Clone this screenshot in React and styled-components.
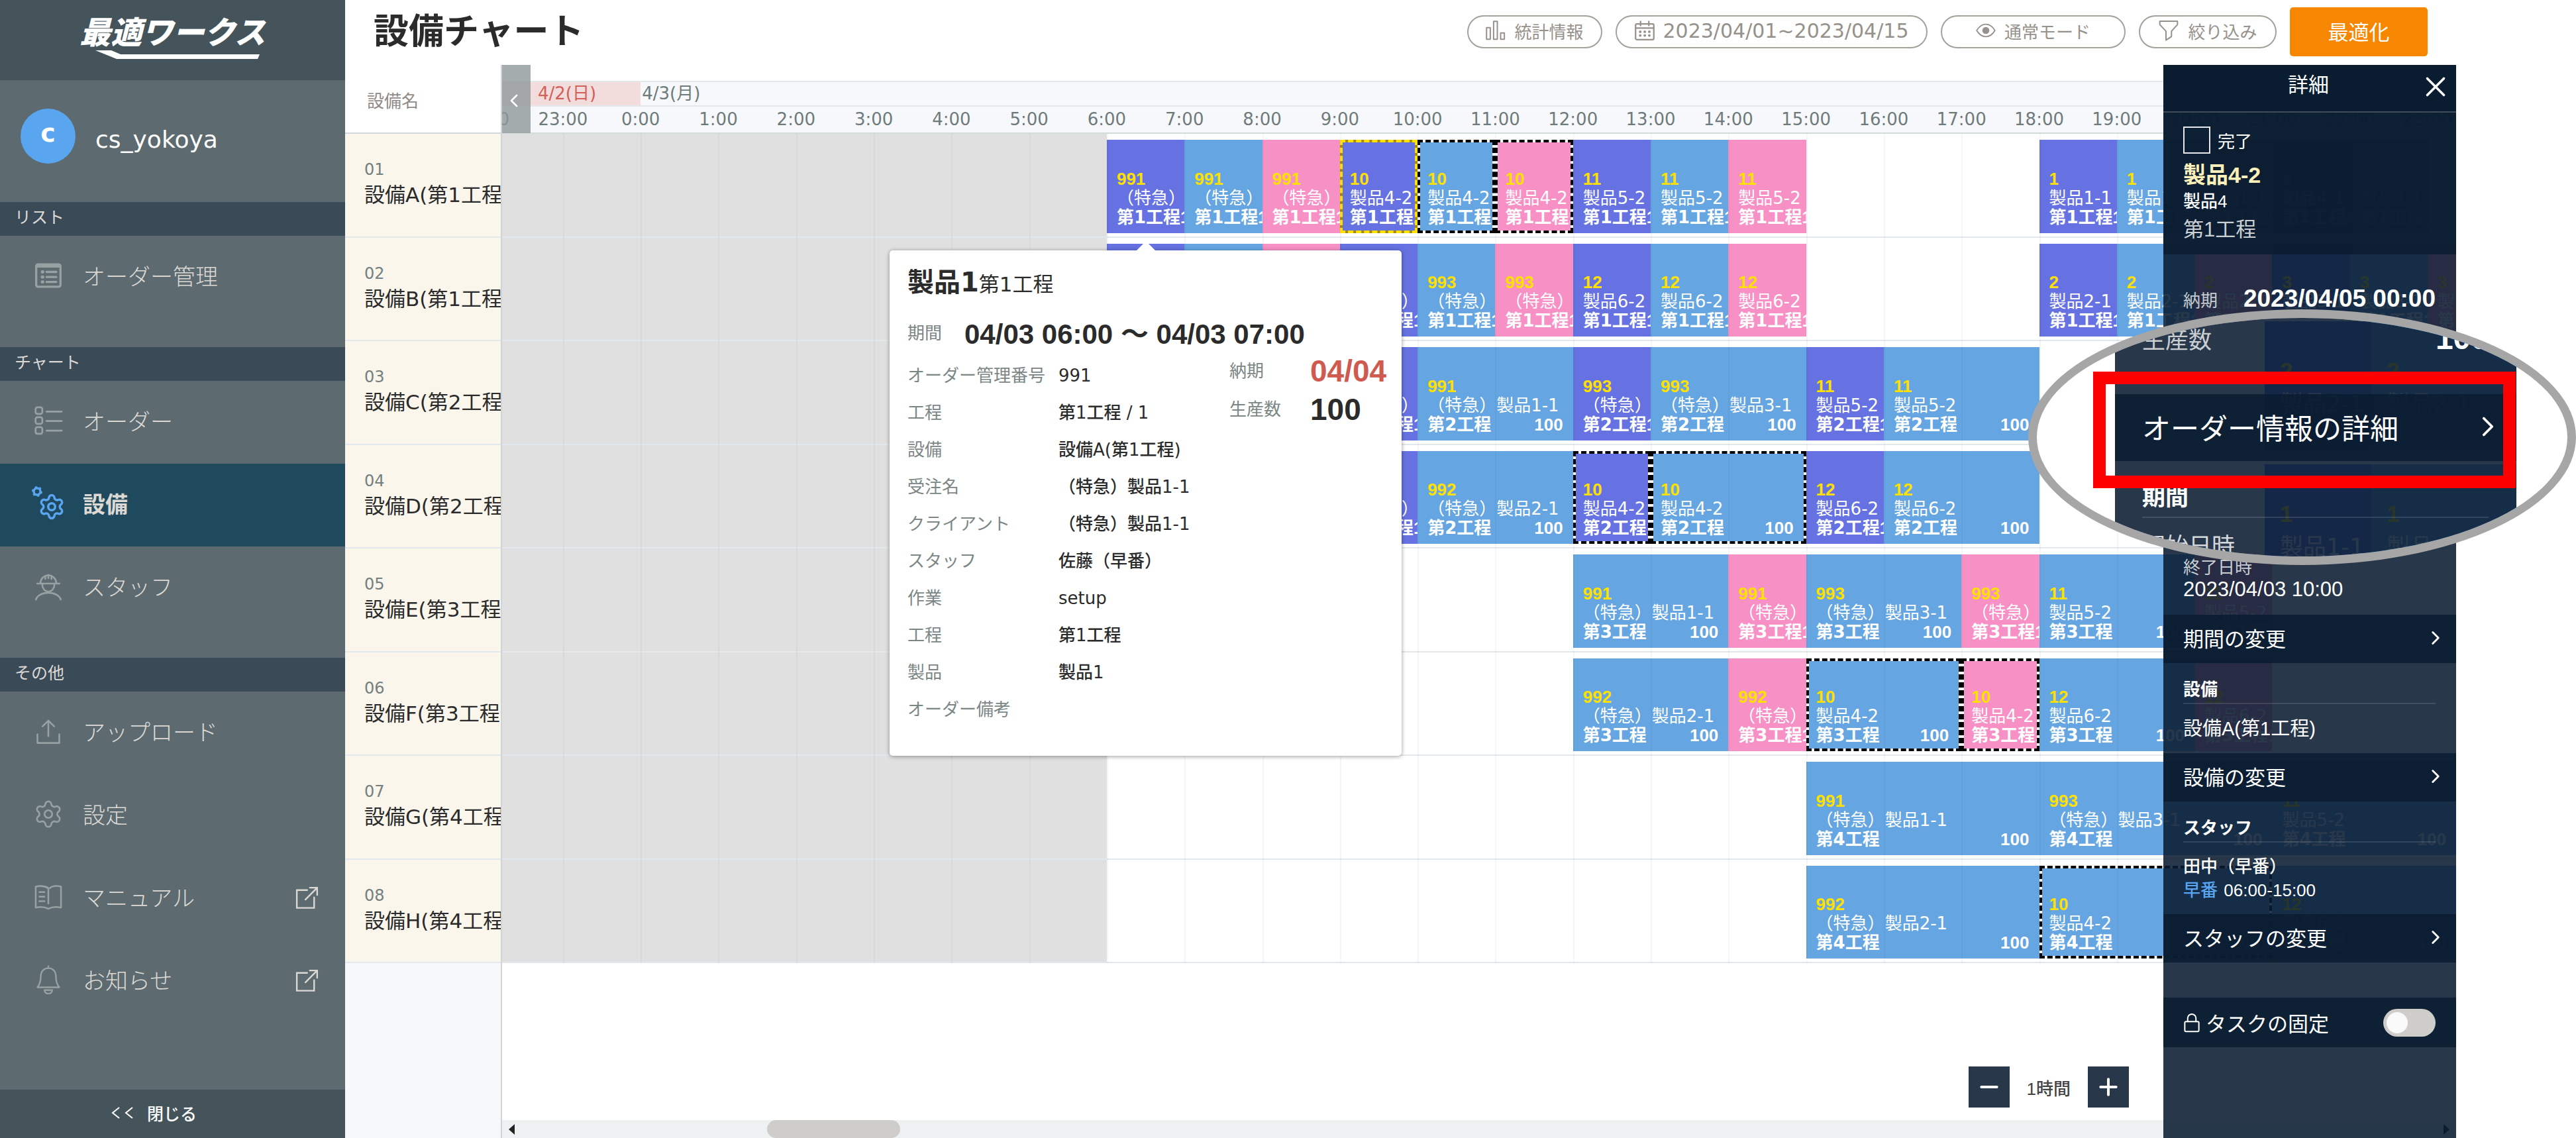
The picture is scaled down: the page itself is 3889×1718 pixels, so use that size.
import React, { useState } from "react";
import styled, { createGlobalStyle, css } from "styled-components";
import { Settings, ChevronLeft, ChevronRight, X, Plus, Minus } from "lucide-react";

const ui = `"DejaVu Sans", "Noto Sans CJK JP", sans-serif`;
const arial = `"Liberation Sans", "Noto Sans CJK JP", sans-serif`;
const sheet = "rgba(10, 28, 49, 0.88)";

// one track per hour, the first and last are cut off by the viewport
const timeTracks = "47fr repeat(24, 60fr) 22fr";
const hourLine = (hour) => hour + 3;

const machines = [
  {
    no: "01",
    name: "設備A(第1工程)",
    process: "第1工程",
    tasks: [
      { from: 6, to: 7, id: "991", rush: true, name: "製品1-1", color: "purple" },
      { from: 7, to: 8, id: "991", rush: true, name: "製品1-1", color: "blue" },
      { from: 8, to: 9, id: "991", rush: true, name: "製品1-1", color: "pink" },
      { from: 9, to: 10, id: "10", name: "製品4-2", color: "purple", mark: "selected" },
      { from: 10, to: 11, id: "10", name: "製品4-2", color: "blue", mark: "related" },
      { from: 11, to: 12, id: "10", name: "製品4-2", color: "pink", mark: "related" },
      { from: 12, to: 13, id: "11", name: "製品5-2", color: "purple" },
      { from: 13, to: 14, id: "11", name: "製品5-2", color: "blue" },
      { from: 14, to: 15, id: "11", name: "製品5-2", color: "pink" },
      { from: 18, to: 19, id: "1", name: "製品1-1", color: "purple" },
      { from: 19, to: 20, id: "1", name: "製品1-1", color: "blue" },
      { from: 20, to: 21, id: "1", name: "製品1-1", color: "pink" },
      { from: 21, to: 22, id: "4", name: "製品4-1", color: "purple" },
      { from: 22, to: 23, id: "4", name: "製品4-1", color: "blue" },
    ],
  },
  {
    no: "02",
    name: "設備B(第1工程)",
    process: "第1工程",
    tasks: [
      { from: 6, to: 7, id: "992", rush: true, name: "製品2-1", color: "purple" },
      { from: 7, to: 8, id: "992", rush: true, name: "製品2-1", color: "blue" },
      { from: 8, to: 9, id: "992", rush: true, name: "製品2-1", color: "pink" },
      { from: 9, to: 10, id: "993", rush: true, name: "製品3-1", color: "purple" },
      { from: 10, to: 11, id: "993", rush: true, name: "製品3-1", color: "blue" },
      { from: 11, to: 12, id: "993", rush: true, name: "製品3-1", color: "pink" },
      { from: 12, to: 13, id: "12", name: "製品6-2", color: "purple" },
      { from: 13, to: 14, id: "12", name: "製品6-2", color: "blue" },
      { from: 14, to: 15, id: "12", name: "製品6-2", color: "pink" },
      { from: 18, to: 19, id: "2", name: "製品2-1", color: "purple" },
      { from: 19, to: 20, id: "2", name: "製品2-1", color: "blue" },
      { from: 20, to: 21, id: "2", name: "製品2-1", color: "pink" },
      { from: 21, to: 22, id: "3", name: "製品3-1", color: "purple" },
      { from: 22, to: 23, id: "3", name: "製品3-1", color: "blue" },
      { from: 23, to: 24, id: "3", name: "製品3-1", color: "pink" },
    ],
  },
  {
    no: "03",
    name: "設備C(第2工程)",
    process: "第2工程",
    tasks: [
      { from: 9, to: 10, id: "991", rush: true, name: "製品1-1", color: "purple" },
      { from: 10, to: 12, id: "991", rush: true, name: "製品1-1", color: "blue" },
      { from: 12, to: 13, id: "993", rush: true, name: "製品3-1", color: "purple" },
      { from: 13, to: 15, id: "993", rush: true, name: "製品3-1", color: "blue" },
      { from: 15, to: 16, id: "11", name: "製品5-2", color: "purple" },
      { from: 16, to: 18, id: "11", name: "製品5-2", color: "blue" },
    ],
  },
  {
    no: "04",
    name: "設備D(第2工程)",
    process: "第2工程",
    tasks: [
      { from: 9, to: 10, id: "992", rush: true, name: "製品2-1", color: "purple" },
      { from: 10, to: 12, id: "992", rush: true, name: "製品2-1", color: "blue" },
      { from: 12, to: 13, id: "10", name: "製品4-2", color: "purple", mark: "related" },
      { from: 13, to: 15, id: "10", name: "製品4-2", color: "blue", mark: "related" },
      { from: 15, to: 16, id: "12", name: "製品6-2", color: "purple" },
      { from: 16, to: 18, id: "12", name: "製品6-2", color: "blue" },
    ],
  },
  {
    no: "05",
    name: "設備E(第3工程)",
    process: "第3工程",
    tasks: [
      { from: 12, to: 14, id: "991", rush: true, name: "製品1-1", color: "blue" },
      { from: 14, to: 15, id: "991", rush: true, name: "製品1-1", color: "pink" },
      { from: 15, to: 17, id: "993", rush: true, name: "製品3-1", color: "blue" },
      { from: 17, to: 18, id: "993", rush: true, name: "製品3-1", color: "pink" },
      { from: 18, to: 20, id: "11", name: "製品5-2", color: "blue" },
      { from: 20, to: 21, id: "11", name: "製品5-2", color: "pink" },
    ],
  },
  {
    no: "06",
    name: "設備F(第3工程)",
    process: "第3工程",
    tasks: [
      { from: 12, to: 14, id: "992", rush: true, name: "製品2-1", color: "blue" },
      { from: 14, to: 15, id: "992", rush: true, name: "製品2-1", color: "pink" },
      { from: 15, to: 17, id: "10", name: "製品4-2", color: "blue", mark: "related" },
      { from: 17, to: 18, id: "10", name: "製品4-2", color: "pink", mark: "related" },
      { from: 18, to: 20, id: "12", name: "製品6-2", color: "blue" },
      { from: 20, to: 21, id: "12", name: "製品6-2", color: "pink" },
    ],
  },
  {
    no: "07",
    name: "設備G(第4工程)",
    process: "第4工程",
    tasks: [
      { from: 15, to: 18, id: "991", rush: true, name: "製品1-1", color: "blue" },
      { from: 18, to: 21, id: "993", rush: true, name: "製品3-1", color: "blue" },
      { from: 21, to: 24, id: "11", name: "製品5-2", color: "blue" },
    ],
  },
  {
    no: "08",
    name: "設備H(第4工程)",
    process: "第4工程",
    tasks: [
      { from: 15, to: 18, id: "992", rush: true, name: "製品2-1", color: "blue" },
      { from: 18, to: 21, id: "10", name: "製品4-2", color: "blue", mark: "related" },
      { from: 21, to: 24, id: "12", name: "製品6-2", color: "blue" },
    ],
  },
];

const popupRows = [
  ["オーダー管理番号", "991"],
  ["工程", "第1工程 / 1"],
  ["設備", "設備A(第1工程)"],
  ["受注名", "（特急）製品1-1"],
  ["クライアント", "（特急）製品1-1"],
  ["スタッフ", "佐藤（早番）"],
  ["作業", "setup"],
  ["工程", "第1工程"],
  ["製品", "製品1"],
  ["オーダー備考", ""],
];

const hours = [-2, ...Array.from({ length: 25 }, (_, i) => i - 1)];

const Icon = ({ size = 44, width = 1.4, children }) => (
  <svg
    width={size}
    height={size}
    viewBox="0 0 24 24"
    fill="none"
    stroke="currentColor"
    strokeWidth={width}
    strokeLinecap="round"
    strokeLinejoin="round"
    aria-hidden="true"
  >
    {children}
  </svg>
);

const TableIcon = () => (
  <Icon width={1.8}>
    <rect x="2" y="2.8" width="20" height="18.4" rx="1.5" />
    <path d="M2.5 4.2h19" strokeWidth="2.4" />
    <path d="M7 9h.4M7 13.2h.4M7 17.2h.4" strokeWidth="2.6" />
    <path d="M10.5 9h8M10.5 13.2h8M10.5 17.2h8" />
  </Icon>
);

const ListIcon = () => (
  <Icon width={1.5}>
    <rect x="1.5" y="1" width="5.5" height="5.5" rx="1.5" />
    <rect x="1.5" y="9.2" width="5.5" height="5.5" rx="1.5" />
    <rect x="1.5" y="17.4" width="5.5" height="5.5" rx="1.5" />
    <path d="M10.5 4.5H23M10.5 12.3H23M10.5 20.3H23" />
  </Icon>
);

const GearsIcon = () => (
  <svg width="52" height="52" viewBox="0 0 52 52" aria-hidden="true">
    <Settings x="10" y="10" width="42" height="42" strokeWidth={2} />
    <circle cx="9" cy="8" r="5" fill="none" stroke="currentColor" strokeWidth="3.5" />
    <circle
      cx="9"
      cy="8"
      r="7"
      fill="none"
      stroke="currentColor"
      strokeWidth="2"
      strokeDasharray="3.3 4"
    />
  </svg>
);

const WorkerIcon = () => (
  <Icon width={1.4}>
    <path d="M5.5 9.5a6.5 6.5 0 0 1 13 0M2.8 9.8h18.4" />
    <path d="M9.5 6V3.5M12 5.5V2.6M14.5 6V3.5" />
    <path d="M7 10.5a5 6 0 0 0 10 0" />
    <path d="M1.8 23a10.3 6.5 0 0 1 20.4 0" />
  </Icon>
);

const UploadIcon = () => (
  <Icon>
    <path d="M12 16V3.2M7.2 8 12 3.2 16.8 8" />
    <path d="M3 14.5V21.6h18V14.5" />
  </Icon>
);

const BookIcon = () => (
  <Icon width={1.4}>
    <path d="M12 4.8C9 3 5 2.8 1.6 3.5v17.3c3.5-.8 7.4-.6 10.4.9 3-1.5 6.9-1.7 10.4-.9V3.5C19 2.8 15 3 13.3 4.8" />
    <path d="M12 4.8V17.500M4.6 8h4.2M4.6 11.8h4.2M4.6 15.5h4.2" />
  </Icon>
);

const BellIcon = () => (
  <Icon width={1.3}>
    <path d="M12 .8v1.7M12 2.5c-4 0-6.300 3-6.300 7.500 0 3.500-.9 6-2.700 8.300h18c-1.800-2.300-2.700-4.800-2.700-8.300 0-4.500-2.300-7.500-6.300-7.500z" />
    <path d="M8.800 20.600a3.200 2.900 0 0 0 6.400 0z" />
  </Icon>
);

const ExternalIcon = () => (
  <Icon size={38} width={1.5}>
    <path d="M12.5 5.5H2.6v17h16.5v-10" strokeLinejoin="miter" />
    <path d="M15 3.2h7v7M22 3.2 10.8 14.6" strokeLinejoin="miter" />
  </Icon>
);

const BarsIcon = () => (
  <Icon size={30} width={1.6}>
    <rect x="1" y="8.5" width="4.5" height="14" />
    <rect x="9.5" y="1" width="4.5" height="21.5" />
    <rect x="18" y="15" width="4.5" height="7.5" />
  </Icon>
);

const CalendarIcon = () => (
  <Icon size={30} width={1.8}>
    <rect x="1" y="4" width="22" height="19" rx="1.5" />
    <path d="M1 9h22M7 1v5M17 1v5" />
    <path d="M6.5 13.5h.2M12 13.5h.2M17.5 13.5h.2M6.5 18h.2M12 18h.2M17.5 18h.2" strokeWidth="3" />
  </Icon>
);

const EyeIcon = () => (
  <Icon size={30} width={1.5}>
    <path d="M1 12c3-5 7-7.5 11-7.5S20 7 23 12c-3 5-7 7.500-11 7.500S4 17 1 12z" />
    <circle cx="12" cy="12" r="3.5" fill="currentColor" />
  </Icon>
);

const FunnelIcon = () => (
  <Icon size={32} width={1.5}>
    <path d="M2 1.5h20v3.8l-6.800 7.500v6L9 23v-10.200L2 5.300z" />
  </Icon>
);

const LockIcon = () => (
  <Icon size={30} width={1.6}>
    <rect x="3.5" y="10.5" width="17" height="12" rx="1.5" />
    <path d="M7 10.5V6.500a5 5 0 0 1 10 0v4" />
  </Icon>
);

const Task = ({ task, process }) => {
  // an hour is only wide enough for the rush tag
  const showName = !task.rush || task.to - task.from > 1;

  return (
    <TaskBox $from={task.from} $to={task.to} $color={task.color} $mark={task.mark}>
      <TaskId>{task.id}</TaskId>
      <div>
        {task.rush && "（特急）"}
        {showName && task.name}
      </div>
      <TaskProcess>
        <span>{process}</span>
        <TaskCount>100</TaskCount>
      </TaskProcess>
    </TaskBox>
  );
};

const Sidebar = () => (
  <Side>
    <Brand>
      <BrandText>最適ワークス</BrandText>
      <svg width="270" height="14" viewBox="0 0 270 14" aria-hidden="true">
        <path d="M18 0h24l14 6h210l-3 7H50z" fill="#fff" />
      </svg>
    </Brand>
    <User>
      <Avatar>c</Avatar>
      <UserName>cs_yokoya</UserName>
    </User>
    <SideTitle>リスト</SideTitle>
    <Menu>
      <MenuItem href="#orders">
        <TableIcon />
        <span>オーダー管理</span>
      </MenuItem>
    </Menu>
    <SideTitle>チャート</SideTitle>
    <Menu>
      <MenuItem href="#order-chart">
        <ListIcon />
        <span>オーダー</span>
      </MenuItem>
      <MenuItem href="#machine-chart" $active>
        <GearsIcon />
        <span>設備</span>
      </MenuItem>
      <MenuItem href="#staff-chart">
        <WorkerIcon />
        <span>スタッフ</span>
      </MenuItem>
    </Menu>
    <SideTitle>その他</SideTitle>
    <Menu>
      <MenuItem href="#upload">
        <UploadIcon />
        <span>アップロード</span>
      </MenuItem>
      <MenuItem href="#settings">
        <Settings size={46} strokeWidth={1.4} />
        <span>設定</span>
      </MenuItem>
      <MenuItem href="#manual">
        <BookIcon />
        <span>マニュアル</span>
        <ExternalIcon />
      </MenuItem>
      <MenuItem href="#news">
        <BellIcon />
        <span>お知らせ</span>
        <ExternalIcon />
      </MenuItem>
    </Menu>
    <CloseMenu type="button">
      <svg width="34" height="20" viewBox="0 0 34 20" fill="none" stroke="currentColor" strokeWidth="2" aria-hidden="true">
        <path d="M12 2 2 10l10 8M32 2 22 10l10 8" />
      </svg>
      閉じる
    </CloseMenu>
  </Side>
);

const TaskPopup = () => (
  <Popup>
    <PopupTitle>
      製品1<small>第1工程</small>
    </PopupTitle>
    <Period>
      <PopupLabel as="span">期間</PopupLabel>
      <strong>04/03 06:00 〜 04/03 07:00</strong>
    </Period>
    <PopupBody>
      <PopupList>
        {popupRows.map(([label, value], i) => (
          <PopupRow key={i}>
            <PopupLabel>{label}</PopupLabel>
            <PopupValue>{value}</PopupValue>
          </PopupRow>
        ))}
      </PopupList>
      <PopupList>
        <PopupFigure>
          <PopupLabel>納期</PopupLabel>
          <FigureValue $late>04/04</FigureValue>
        </PopupFigure>
        <PopupFigure>
          <PopupLabel>生産数</PopupLabel>
          <FigureValue>100</FigureValue>
        </PopupFigure>
      </PopupList>
    </PopupBody>
  </Popup>
);

const DetailPanel = () => {
  const [done, setDone] = useState(false);
  const [locked, setLocked] = useState(false);

  return (
    <Panel>
      <PanelHeader>
        <h2>詳細</h2>
        <ClosePanel type="button" aria-label="閉じる">
          <X size={50} strokeWidth={1.7} />
        </ClosePanel>
      </PanelHeader>
      <Summary>
        <Done>
          <DoneBox type="checkbox" checked={done} onChange={() => setDone(!done)} />
          完了
        </Done>
        <SummaryTitle>製品4-2</SummaryTitle>
        <SummaryProduct>製品4</SummaryProduct>
        <SummaryProcess>第1工程</SummaryProcess>
      </Summary>
      <Figures>
        <Figure>
          <span>納期</span>
          <strong>2023/04/05 00:00</strong>
        </Figure>
        <Figure>
          <span>生産数</span>
          <strong>100</strong>
        </Figure>
      </Figures>
      <PanelButton type="button">
        オーダー情報の詳細
        <ChevronRight size={34} strokeWidth={2} />
      </PanelButton>
      <Section>
        <SectionTitle>期間</SectionTitle>
        <DateLabel>開始日時</DateLabel>
        <DateValue>2023/04/03 09:00</DateValue>
        <DateLabel>終了日時</DateLabel>
        <DateValue>2023/04/03 10:00</DateValue>
      </Section>
      <PanelButton type="button">
        期間の変更
        <ChevronRight size={34} strokeWidth={2} />
      </PanelButton>
      <Section>
        <SectionTitle>設備</SectionTitle>
        <MachineName>設備A(第1工程)</MachineName>
      </Section>
      <PanelButton type="button">
        設備の変更
        <ChevronRight size={34} strokeWidth={2} />
      </PanelButton>
      <Section>
        <SectionTitle>スタッフ</SectionTitle>
        <StaffLine>田中（早番）</StaffLine>
        <StaffLine>
          <em>早番</em> 06:00-15:00
        </StaffLine>
      </Section>
      <PanelButton type="button">
        スタッフの変更
        <ChevronRight size={34} strokeWidth={2} />
      </PanelButton>
      <LockRow>
        <LockIcon />
        タスクの固定
        <Toggle type="checkbox" role="switch" checked={locked} onChange={() => setLocked(!locked)} />
      </LockRow>
    </Panel>
  );
};

// enlarged view of the "オーダー情報の詳細" entry
const Magnifier = () => (
  <Callout>
    <Lens>
      <LensChart>
        <LensTask $color="purple">
          <b>2</b>製品2-1
        </LensTask>
        <LensTask $color="blue">
          <b>2</b>製品2-1
        </LensTask>
        <LensTask $color="purple">
          <b>1</b>製品1-1
        </LensTask>
        <LensTask $color="blue">
          <b>1</b>製品
        </LensTask>
      </LensChart>
      <LensSheet>
        <LensFigure>
          <span>生産数</span>
          <strong>100</strong>
        </LensFigure>
        <LensButton type="button">
          オーダー情報の詳細
          <ChevronRight size={50} strokeWidth={1.8} />
        </LensButton>
        <LensSection>
          <LensTitle>期間</LensTitle>
          <p>開始日時</p>
        </LensSection>
      </LensSheet>
    </Lens>
    <RedFrame />
  </Callout>
);

const App = () => {
  return (
    <>
      <GlobalStyle />
      <Page>
        <Sidebar />
        <Main>
          <TopBar>
            <Title>設備チャート</Title>
            <Tools>
              <Pill type="button" $width={204}>
                <BarsIcon />
                統計情報
              </Pill>
              <Pill type="button" $width={471} $large>
                <CalendarIcon />
                2023/04/01~2023/04/15
              </Pill>
              <Pill type="button" $width={279}>
                <EyeIcon />
                通常モード
              </Pill>
              <Pill type="button" $width={208}>
                <FunnelIcon />
                絞り込み
              </Pill>
              <Optimize type="button">最適化</Optimize>
            </Tools>
          </TopBar>
          <Chart>
            <Names>
              <NamesHeader>設備名</NamesHeader>
              <NameRows>
                {machines.map((m) => (
                  <NameCell key={m.no}>
                    <small>{m.no}</small>
                    {m.name}
                  </NameCell>
                ))}
              </NameRows>
            </Names>
            <Timeline>
              <Dates>
                <DateCell $sunday>4/2(日)</DateCell>
                <DateCell>4/3(月)</DateCell>
              </Dates>
              <Hours>
                {hours.map((h) => (
                  <Hour key={h} $hour={h}>
                    <span>{(h + 24) % 24}:00</span>
                  </Hour>
                ))}
              </Hours>
              <Rows>
                <Closed />
                {machines.map((m) => (
                  <Row key={m.no}>
                    {m.tasks.map((t, i) => (
                      <Task key={i} task={t} process={m.process} />
                    ))}
                  </Row>
                ))}
                <Ticks>
                  {Array.from({ length: 26 }, (_, i) => (
                    <i key={i} />
                  ))}
                </Ticks>
              </Rows>
              <Scrollbar>
                <Arrow />
                <Thumb />
                <Arrow $right />
              </Scrollbar>
              <Fold type="button" aria-label="前へ">
                <ChevronLeft size={32} strokeWidth={2} />
              </Fold>
              <TaskPopup />
              <Scale>
                <ScaleButton type="button" aria-label="縮小">
                  <Minus size={40} strokeWidth={2.4} />
                </ScaleButton>
                <span>1時間</span>
                <ScaleButton type="button" aria-label="拡大">
                  <Plus size={40} strokeWidth={2.4} />
                </ScaleButton>
              </Scale>
            </Timeline>
            <DetailPanel />
          </Chart>
        </Main>
        <Magnifier />
      </Page>
    </>
  );
};

export default App;

const colors = {
  purple: "#6672e2",
  blue: "#65a5e1",
  pink: "#f790c5",
};

const GlobalStyle = createGlobalStyle`
  * {
    box-sizing: border-box;
  }

  body {
    margin: 0;
    background: #fff;
    color: #2b2b2b;
    font-family: ${ui};
    font-size: 26px;
  }

  button {
    font-family: inherit;
    cursor: pointer;
  }

  h1, h2, h3, p, dl, dd {
    margin: 0;
    font-weight: 400;
  }
`;

const Page = styled.div`
  position: relative;
  display: flex;
  height: 100vh;
  overflow: hidden;
`;

const Side = styled.nav`
  flex: none;
  display: flex;
  flex-direction: column;
  width: 521px;
  background: #5d6b70;
  color: #dcd9d5;
`;

const Brand = styled.div`
  display: flex;
  flex-direction: column;
  align-items: center;
  height: 121px;
  padding-top: 24px;
  background: #44545a;
`;

const BrandText = styled.div`
  color: #fff;
  font-size: 47px;
  font-style: italic;
  font-weight: 900;
  line-height: 52px;
`;

const User = styled.div`
  display: flex;
  align-items: center;
  gap: 30px;
  height: 184px;
  padding: 0 0 16px 31px;
  color: #fff;
  font-size: 36px;
`;

const UserName = styled.span`
  padding-top: 10px;
`;

const Avatar = styled.span`
  width: 83px;
  height: 83px;
  border-radius: 50%;
  background: #59a5f0;
  font-size: 38px;
  font-weight: 700;
  line-height: 74px;
  text-align: center;
`;

const SideTitle = styled.div`
  height: 51px;
  padding-left: 22px;
  background: #3b4a57;
  font-size: 25px;
  line-height: 48px;
`;

const Menu = styled.div`
  padding-bottom: 43px;
`;

const MenuItem = styled.a`
  display: grid;
  grid-template-columns: 52px 1fr auto;
  align-items: center;
  justify-items: center;
  column-gap: 26px;
  height: 125px;
  padding: 0 39px 6px 47px;
  background: ${(props) => (props.$active ? "#1f495c" : "none")};
  color: inherit;
  font-size: 34px;
  font-weight: ${(props) => (props.$active ? 700 : 300)};
  text-decoration: none;

  span {
    justify-self: start;
  }

  svg:first-child {
    color: ${(props) => (props.$active ? "#59a5f0" : "#97a1a2")};
  }
`;

const CloseMenu = styled.button`
  display: flex;
  align-items: center;
  gap: 20px;
  height: 73px;
  margin-top: auto;
  padding: 0 0 4px 168px;
  border: none;
  background: #44545a;
  color: #fff;
  font-size: 25px;
  font-weight: 500;
`;

const Main = styled.main`
  flex: 1;
  min-width: 0;
  display: flex;
  flex-direction: column;
  padding-right: 181px;
`;

const TopBar = styled.header`
  display: flex;
  align-items: center;
  justify-content: space-between;
  height: 98px;
  padding: 0 43px 2px;
`;

const Title = styled.h1`
  font-size: 53px;
  font-weight: 700;
  line-height: 80px;
`;

const Tools = styled.div`
  display: flex;
  align-items: center;
  gap: 20px;
`;

const Pill = styled.button`
  display: flex;
  align-items: center;
  justify-content: center;
  gap: 13px;
  width: ${(props) => props.$width}px;
  height: 50px;
  padding: 0 0 4px;
  border: 2px solid #a5a09a;
  border-radius: 25px;
  background: #fff;
  color: #97918b;
  font-size: ${(props) => (props.$large ? 30 : 26)}px;
  white-space: nowrap;
`;

const Optimize = styled.button`
  width: 208px;
  height: 74px;
  padding-bottom: 4px;
  border: none;
  border-radius: 5px;
  background: #f78600;
  color: #fff;
  font-size: 31px;
`;

const Chart = styled.div`
  position: relative;
  flex: 1;
  display: grid;
  grid-template-columns: 237px 1fr;
  min-height: 0;
  overflow: hidden;
`;

const Names = styled.div`
  border-right: 2px solid #cfd4d6;
  background: #f6f8fb;
`;

const NamesHeader = styled.div`
  height: 104px;
  padding: 34px 0 0 33px;
  border-bottom: 2px solid #d4dadb;
  background: #fff;
  color: #8f8a87;
  font-size: 26px;
`;

const NameRows = styled.div`
  display: grid;
  grid-template-rows: repeat(8, 1fr);
  height: 1252px;
`;

const NameCell = styled.div`
  padding: 36px 0 0 29px;
  border-bottom: 2px solid #e3e8ec;
  background: #faf6ec;
  font-size: 31px;
  line-height: 40px;
  white-space: nowrap;
  overflow: hidden;

  small {
    display: block;
    color: #74807f;
    font-size: 24px;
    line-height: 36px;
  }
`;

const Timeline = styled.div`
  position: relative;
  display: flex;
  flex-direction: column;
  min-width: 0;
  overflow: hidden;
`;

const Dates = styled.div`
  display: grid;
  grid-template-columns: ${timeTracks};
  height: 37px;
  margin-top: 24px;
  border-top: 2px solid #e3e8ea;
  background: #f6f8fb;
`;

const DateCell = styled.div`
  grid-column: ${(props) => (props.$sunday ? "1 / 3" : "3 / -1")};
  padding-left: ${(props) => (props.$sunday ? 54 : 2)}px;
  background: ${(props) => (props.$sunday ? "#f2dcdc" : "none")};
  color: ${(props) => (props.$sunday ? "#d35f58" : "#6f7b7a")};
  line-height: 35px;
`;

const Hours = styled.div`
  display: grid;
  grid-template-columns: ${timeTracks};
  height: 43px;
  border-top: 2px solid #e3e8ea;
  border-bottom: 2px solid #d4dadb;
  background: #f6f8fb;
  color: #6f7b7a;
  line-height: 38px;
`;

// the label is centred on the start line of its hour
const Hour = styled.div`
  display: flex;
  justify-content: ${(props) => (props.$hour === -2 ? "flex-start" : "center")};
  grid-column: ${(props) => (props.$hour === -2 ? 1 : hourLine(props.$hour))};
  grid-row: 1;
  width: 0;

  span {
    flex: none;
    ${(props) => props.$hour === -2 && "margin-left: -64px;"}
  }
`;

const Rows = styled.div`
  position: relative;
  display: grid;
  grid-template-rows: repeat(8, 1fr);
  height: 1252px;
`;

const Row = styled.div`
  position: relative;
  display: grid;
  grid-template-columns: ${timeTracks};
  padding: 9px 0 5px;
  border-bottom: 2px solid #e3e8ec;
`;

const overlayGrid = css`
  position: absolute;
  inset: 0;
  display: grid;
  grid-template-columns: ${timeTracks};
  pointer-events: none;
`;

const Closed = styled.div`
  ${overlayGrid}

  &::before {
    content: "";
    grid-column: 1 / ${hourLine(6)};
    background: #e0e0e0;
  }
`;

const Ticks = styled.div`
  ${overlayGrid}

  i + i {
    border-left: 2px solid rgba(40, 70, 90, 0.05);
  }
`;

const TaskBox = styled.div`
  grid-column: ${(props) => hourLine(props.$from)} / ${(props) => hourLine(props.$to)};
  grid-row: 1;
  display: flex;
  flex-direction: column;
  justify-content: flex-end;
  min-width: 0;
  padding: 0 0 9px 15px;
  background: ${(props) => colors[props.$color]};
  color: #fff;
  line-height: 29px;
  white-space: nowrap;
  overflow: hidden;

  ${(props) =>
    props.$mark &&
    css`
      padding: 0 0 5px 11px;
      border: 4px dashed ${props.$mark === "selected" ? "#ffe100" : "#000"};
      background:
        linear-gradient(${colors[props.$color]}, ${colors[props.$color]}) padding-box,
        ${props.$mark === "selected" ? "#a08c00" : "#fff"};
    `}
`;

const TaskId = styled.div`
  color: #ffe100;
  font-family: ${arial};
  font-weight: 700;
`;

const TaskProcess = styled.div`
  display: flex;
  justify-content: space-between;
  padding-right: 15px;
  font-weight: 700;
`;

const TaskCount = styled.span`
  font-family: ${arial};
`;

const Scrollbar = styled.div`
  display: flex;
  align-items: center;
  height: 27px;
  margin-top: auto;
  padding: 0 10px;
  background: #edf1f2;
`;

const Arrow = styled.i`
  border: 8px solid transparent;
  border-width: 8px 9px;
  border-left-width: ${(props) => (props.$right ? 9 : 0)}px;
  border-right-width: ${(props) => (props.$right ? 0 : 9)}px;
  border-left-color: ${(props) => (props.$right ? "#222" : "transparent")};
  border-right-color: ${(props) => (props.$right ? "transparent" : "#222")};
`;

const Thumb = styled.div`
  width: 201px;
  height: 27px;
  margin: 0 auto 0 13%;
  border-radius: 14px;
  background: #cfcdca;
`;

const Fold = styled.button`
  position: absolute;
  top: 0;
  left: 0;
  width: 43px;
  height: 103px;
  padding: 8px 8px 0 0;
  border: none;
  background: rgba(143, 151, 154, 0.8);
  color: #fff;
`;

const Popup = styled.div`
  position: absolute;
  top: 280px;
  left: 585px;
  width: 773px;
  height: 763px;
  padding: 20px 20px 0 27px;
  border-radius: 5px;
  background: #fff;
  box-shadow: 0 1px 6px rgba(0, 0, 0, 0.4);

  &::before {
    content: "";
    position: absolute;
    top: -14px;
    left: 373px;
    border: 14px solid transparent;
    border-top: none;
    border-bottom-color: #fff;
  }
`;

const PopupTitle = styled.h3`
  font-size: 40px;
  font-weight: 700;
  line-height: 56px;

  small {
    font-size: 31px;
    font-weight: 400;
  }
`;

const Period = styled.div`
  display: flex;
  align-items: center;
  gap: 34px;
  height: 58px;
  margin-top: 14px;

  strong {
    font-family: ${arial};
    font-size: 42px;
    white-space: nowrap;
  }
`;

const PopupBody = styled.div`
  display: flex;
  justify-content: space-between;
`;

const PopupList = styled.dl`
  margin-top: 10px;
`;

const PopupRow = styled.div`
  display: grid;
  grid-template-columns: 228px auto;
  height: 56px;
  line-height: 56px;
`;

const PopupLabel = styled.dt`
  color: #7b8685;
  font-size: 26px;
  white-space: nowrap;
`;

const PopupValue = styled.dd`
  font-weight: 500;
  white-space: nowrap;
`;

const PopupFigure = styled.div`
  display: grid;
  grid-template-columns: 122px 118px;
  height: 58px;
  line-height: 42px;
`;

const FigureValue = styled.dd`
  color: ${(props) => (props.$late ? "#cf5b50" : "#2b2b2b")};
  font-family: ${arial};
  font-size: 46px;
  font-weight: 700;
`;

const Scale = styled.div`
  position: absolute;
  right: 494px;
  bottom: 46px;
  display: flex;
  align-items: center;
  gap: 26px;
  color: #444;
  font-family: ${arial};
  font-weight: 500;
`;

const ScaleButton = styled.button`
  display: flex;
  align-items: center;
  justify-content: center;
  width: 62px;
  height: 62px;
  padding: 0;
  border: none;
  background: #28384a;
  color: #fff;
`;

const Panel = styled.aside`
  position: absolute;
  top: 0;
  right: 0;
  bottom: 0;
  width: 442px;
  background: ${sheet};
  color: #fff;
  font-family: ${arial};
`;

const PanelHeader = styled.header`
  position: relative;
  height: 72px;
  border-bottom: 2px solid #3e4c5b;
  background: #091c30;
  text-align: center;

  h2 {
    padding-right: 4px;
    font-size: 31px;
    line-height: 62px;
  }
`;

const ClosePanel = styled.button`
  position: absolute;
  top: 8px;
  right: 6px;
  height: 50px;
  padding: 0;
  border: none;
  background: none;
  color: #fff;
`;

const Summary = styled.div`
  height: 214px;
  padding: 21px 31px 0 30px;
  background: ${sheet};
`;

const Done = styled.label`
  display: flex;
  align-items: center;
  gap: 11px;
  height: 42px;
  padding-bottom: 2px;
`;

const DoneBox = styled.input`
  appearance: none;
  width: 41px;
  height: 41px;
  margin: 0;
  border: 2px solid #e5e7e9;

  &:checked {
    background: #59a5f0;
  }
`;

const SummaryTitle = styled.p`
  margin-top: 9px;
  color: #fbf0b9;
  font-size: 34px;
  font-weight: 700;
  line-height: 44px;
`;

const SummaryProduct = styled.p`
  font-weight: 500;
  line-height: 36px;
`;

const SummaryProcess = styled.p`
  color: #cbd0d4;
  font-size: 31px;
  line-height: 50px;
`;

const Figures = styled.div`
  height: 230px;
  padding: 17px 31px 0 30px;
`;

const Figure = styled.div`
  display: flex;
  align-items: center;
  justify-content: space-between;
  height: 100px;

  span {
    color: #c4cad0;
  }

  strong {
    font-size: 37px;
  }
`;

const PanelButton = styled.button`
  display: flex;
  align-items: center;
  justify-content: space-between;
  width: 100%;
  height: 73px;
  padding: 0 14px 4px 30px;
  border: none;
  background: ${sheet};
  color: #fff;
  font-size: 31px;
`;

const Section = styled.section`
  padding: 22px 31px 18px 30px;
`;

const SectionTitle = styled.h3`
  margin-bottom: 18px;
  padding-bottom: 2px;
  border-bottom: 2px solid rgba(255, 255, 255, 0.12);
  font-size: 26px;
  font-weight: 700;
  line-height: 36px;
`;

const DateLabel = styled.p`
  color: #c9ced3;
  line-height: 26px;
`;

const DateValue = styled.p`
  font-size: 31px;
  line-height: 40px;

  & + ${DateLabel} {
    margin-top: 11px;
  }
`;

const MachineName = styled.p`
  font-size: 29px;
  line-height: 38px;
`;

const StaffLine = styled.p`
  font-weight: 500;
  line-height: 36px;

  em {
    margin-right: 2px;
    color: #59a5f0;
    font-style: normal;
  }
`;

const LockRow = styled.label`
  display: flex;
  align-items: center;
  gap: 6px;
  height: 75px;
  margin-top: 53px;
  padding: 0 31px 0 28px;
  background: ${sheet};
  font-size: 31px;
`;

const Toggle = styled.input`
  appearance: none;
  width: 79px;
  height: 42px;
  margin: 0 0 0 auto;
  padding: 5px;
  border-radius: 21px;
  background: #cfcdca;

  &::before {
    content: "";
    display: block;
    width: 32px;
    height: 32px;
    border-radius: 50%;
    background: #fafafa;
  }

  &:checked {
    padding-left: 42px;
    background: #59a5f0;
  }
`;

const Callout = styled.div`
  position: absolute;
  top: 467px;
  right: 0;
  width: 827px;
  height: 386px;
`;

const Lens = styled.div`
  position: relative;
  height: 100%;
  padding: 0 77px 0 118px;
  border: 13px solid #a6a6a6;
  border-radius: 50%;
  background: #fff;
  overflow: hidden;
`;

const LensChart = styled.div`
  position: absolute;
  inset: 5px 77px 0 344px;
  display: grid;
  grid-template-columns: 161px 1fr;
  grid-template-rows: 194px 194px;
  row-gap: 22px;
`;

const LensTask = styled.div`
  padding: 50px 0 0 23px;
  background: ${(props) => colors[props.$color]};
  color: #fff;
  font-size: 35px;
  line-height: 50px;

  b {
    display: block;
    color: #ffe100;
    font-family: ${arial};
  }
`;

const LensSheet = styled.div`
  position: relative;
  height: 100%;
  background: ${sheet};
  color: #fff;
  font-family: ${arial};
`;

const LensFigure = styled.div`
  display: flex;
  align-items: center;
  justify-content: space-between;
  height: 115px;
  padding: 0 42px 54px 41px;
  color: #c9ced3;
  font-size: 35px;

  strong {
    color: #fff;
    font-size: 48px;
  }
`;

const LensButton = styled.button`
  display: flex;
  align-items: center;
  justify-content: space-between;
  width: 100%;
  height: 101px;
  padding: 0 18px 4px 41px;
  border: none;
  background: ${sheet};
  color: #fff;
  font-size: 43px;
`;

const LensSection = styled.div`
  padding: 32px 42px 0 41px;
  color: #d5d9dd;
  font-size: 35px;
  line-height: 46px;
`;

const LensTitle = styled.h3`
  margin-bottom: 20px;
  padding-bottom: 6px;
  border-bottom: 2px solid rgba(255, 255, 255, 0.12);
  color: #fff;
  font-size: 35px;
  font-weight: 700;
`;

const RedFrame = styled.div`
  position: absolute;
  top: 94px;
  right: 91px;
  width: 638px;
  height: 176px;
  border: 19px solid #fe0000;
`;
